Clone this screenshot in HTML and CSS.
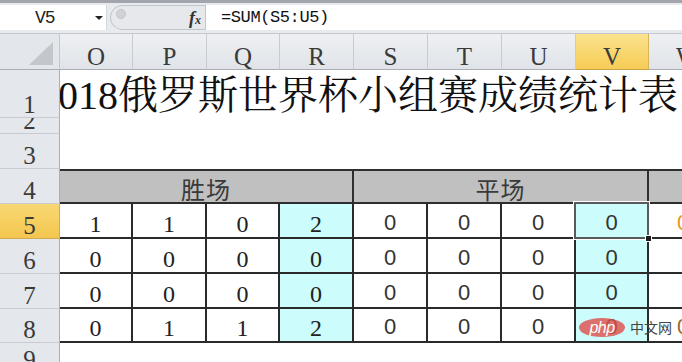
FILE: index.html
```html
<!DOCTYPE html>
<html lang="zh">
<head>
<meta charset="utf-8">
<title>2018俄罗斯世界杯小组赛成绩统计表</title>
<link rel="stylesheet" href="styles.css">
</head>
<body>
<div class="fbar">
  <div class="namebox"><span class="ref">V5</span><span class="caret"></span></div>
  <div class="pill">
    <svg class="knob" width="24" height="25" viewBox="0 0 24 25"><circle cx="9" cy="9" r="4.5" fill="#cfd2d6" stroke="#b9bdc2" stroke-width="0.8"/></svg>
    <span class="fx">f<span class="fxs">x</span></span>
  </div>
  <div class="formula">=SUM(S5:U5)</div>
</div>

<div class="sheet">
  <div class="corner"><svg width="24" height="23" viewBox="0 0 24 23"><polygon points="24,0 24,23 0,23" fill="#c3c6ca"/></svg></div>
  <div class="ch">O</div><div class="ch">P</div><div class="ch">Q</div><div class="ch">R</div>
  <div class="ch">S</div><div class="ch">T</div><div class="ch">U</div><div class="ch ch-sel">V</div><div class="ch ch-last">W</div>

  <div class="rh">1</div>
  <div class="title"><span class="title-text">2018俄罗斯世界杯小组赛成绩统计表</span></div>

  <div class="rh">2</div><div class="blank"></div>
  <div class="rh">3</div><div class="blank"></div>

  <div class="rh">4</div>
  <div class="grp">胜场</div><div class="grp">平场</div><div class="grp grp-last"></div>

  <div class="rh rh-sel">5</div>
  <div class="d">1</div><div class="d">1</div><div class="d">0</div><div class="d sum">2</div>
  <div class="d s">0</div><div class="d s">0</div><div class="d s">0</div><div class="d s sum sel">0</div><div class="d w"><span class="wv">0</span></div>

  <div class="rh">6</div>
  <div class="d">0</div><div class="d">0</div><div class="d">0</div><div class="d sum">0</div>
  <div class="d s">0</div><div class="d s">0</div><div class="d s">0</div><div class="d s sum">0</div><div class="d w"></div>

  <div class="rh">7</div>
  <div class="d">0</div><div class="d">0</div><div class="d">0</div><div class="d sum">0</div>
  <div class="d s">0</div><div class="d s">0</div><div class="d s">0</div><div class="d s sum">0</div><div class="d w"></div>

  <div class="rh">8</div>
  <div class="d">0</div><div class="d">1</div><div class="d">1</div><div class="d sum">2</div>
  <div class="d s">0</div><div class="d s">0</div><div class="d s">0</div><div class="d s sum">0</div><div class="d w"><span class="wv wv2">0</span></div>

  <div class="rh">9</div><div class="blank"></div>
</div>

<div class="wm"><span class="wm-logo">php</span><span class="wm-text">中文网</span></div>
</body>
</html>
```

FILE: styles.css
```css
html, body {
  margin: 0;
  padding: 0;
}
body {
  width: 682px;
  height: 362px;
  overflow: hidden;
  background: #ffffff;
  font-family: "Liberation Serif", "Noto Serif CJK SC", "Noto Sans CJK SC", serif;
  color: #222;
  position: relative;
}

/* ---------- formula bar ---------- */
.fbar {
  box-sizing: border-box;
  height: 34px;
  border-top: 3px solid #a2a6ac;
  border-bottom: 1px solid #c4c8ce;
  padding: 2px 0 3px;
  background: #e8ebee;
  display: flex;
}
.namebox {
  width: 107px;
  background: #ffffff;
  display: flex;
  align-items: center;
  box-sizing: border-box;
  padding-left: 35px;
  border-right: 1px solid #d3d6da;
}
.ref {
  font-family: "Liberation Mono", monospace;
  font-size: 18px;
  color: #222;
  letter-spacing: -1px;
}
.caret {
  width: 0;
  height: 0;
  margin-left: 40px;
  border-left: 4px solid transparent;
  border-right: 4px solid transparent;
  border-top: 4px solid #222;
}
.pill {
  width: 95px;
  margin-left: 3px;
  box-sizing: border-box;
  background: #e6e8ec;
  border: 1px solid #c2c6cc;
  border-right: none;
  border-radius: 13px 0 0 13px;
  display: flex;
  align-items: center;
  justify-content: space-between;
  padding-right: 4px;
}
.knob {
  display: block;
  margin-left: 1px;
}
.fx {
  font-family: "Liberation Serif", serif;
  font-style: italic;
  font-weight: bold;
  font-size: 18px;
  color: #333;
  line-height: 1;
}
.fxs {
  font-size: 12px;
}
.formula {
  flex: 1;
  background: #ffffff;
  border-left: 1px solid #c2c6cc;
  padding-left: 15px;
  font-family: "Liberation Mono", monospace;
  font-size: 17px;
  line-height: 25px;
  color: #111;
  letter-spacing: -0.4px;
}

/* ---------- sheet grid ---------- */
.sheet {
  display: grid;
  grid-template-columns: 60px 73px 74px 73px 74px 74px 74px 74px 73px 74px;
  grid-template-rows: 36px 48px 16px 35px 35px 35px 35px 35px 34px 30px;
  width: 682px;
  overflow: hidden;
}
.corner {
  background: #e3e6ea;
  border-right: 1px solid #c4c8ce;
  border-bottom: 1px solid #a9aeb5;
  display: flex;
  align-items: flex-end;
  justify-content: flex-end;
  padding: 0 6px 4px 0;
}
.corner svg { display: block; }
.ch {
  box-sizing: border-box;
  background: linear-gradient(#eef0f3, #e0e4e8);
  border-right: 1px solid #c8ccd2;
  border-bottom: 1px solid #a9aeb5;
  display: flex;
  align-items: flex-end;
  justify-content: center;
  font-size: 25px;
  line-height: 25px;
  color: #3a3a3a;
}
.ch-sel {
  background: linear-gradient(#fbe38e, #f6cc55);
  border-right-color: #d8b35a;
  border-bottom-color: #c9a24a;
}
.ch-last {
  border-right: none;
  justify-content: flex-start;
  padding-left: 27px;
}
.rh {
  box-sizing: border-box;
  background: #e4e7eb;
  border-right: 1px solid #a9aeb5;
  border-bottom: 1px solid #c8ccd2;
  display: flex;
  align-items: flex-end;
  justify-content: center;
  font-size: 25px;
  line-height: 24px;
  color: #3a3a3a;
  overflow: hidden;
}
.rh-sel {
  background: linear-gradient(#f8d873, #f4c64f);
  border-bottom-color: #d2aa4f;
}
.title {
  grid-column: span 9;
  overflow: hidden;
  white-space: nowrap;
  padding-top: 6px;
  box-sizing: border-box;
}
.title-text {
  display: block;
  font-size: 40px;
  line-height: 40px;
  text-indent: -22px;
  color: #111;
}
.blank {
  grid-column: span 9;
}
.grp {
  grid-column: span 4;
  box-sizing: border-box;
  background: #c0c0c0;
  border-top: 2px solid #2e2e2e;
  border-bottom: 2px solid #2e2e2e;
  border-right: 2px solid #2e2e2e;
  display: flex;
  align-items: center;
  justify-content: center;
  padding-top: 3px;
  font-family: "Noto Sans CJK SC", "Noto Sans", sans-serif;
  font-size: 24px;
  color: #3a3a3a;
  letter-spacing: 1px;
}
.grp-last {
  grid-column: span 1;
  border-right: none;
}
.d {
  box-sizing: border-box;
  background: #ffffff;
  border-right: 2px solid #2a2a2a;
  border-bottom: 2px solid #2a2a2a;
  display: flex;
  align-items: flex-end;
  justify-content: center;
  font-size: 24px;
  line-height: 24px;
  padding-bottom: 1px;
  color: #222;
}
.d.s {
  font-family: "Liberation Sans", sans-serif;
  font-size: 22px;
  line-height: 22px;
  padding-bottom: 3px;
  color: #333;
}
.sum {
  background: #ccfcfc;
}
.sel {
  position: relative;
}
.sel::after {
  content: "";
  position: absolute;
  left: -2px;
  top: -2px;
  right: -2px;
  bottom: -2px;
  border: 2px solid #5a5a5a;
  box-shadow: 0 0 0 1px #ffffff;
}
.sel::before {
  content: "";
  position: absolute;
  right: -5px;
  bottom: -5px;
  width: 5px;
  height: 5px;
  background: #1a1a1a;
  border: 1px solid #ffffff;
  z-index: 2;
}
.d.w {
  border-right: none;
  justify-content: flex-start;
  padding-left: 28px;
}
.wv {
  font-family: "Liberation Sans", sans-serif;
  font-size: 22px;
  line-height: 22px;
  padding-bottom: 2px;
  color: #e09a20;
}
.wv2 {
  color: #a06a30;
}

/* ---------- watermark overlay ---------- */
.wm {
  position: absolute;
  left: 579px;
  top: 318px;
  display: flex;
  align-items: center;
  gap: 5px;
}
.wm-logo {
  width: 46px;
  height: 19px;
  border-radius: 50%;
  background: rgba(222, 80, 76, 0.82);
  color: #ffffff;
  font-family: "Liberation Sans", sans-serif;
  font-style: italic;
  font-size: 16px;
  line-height: 19px;
  text-align: center;
  letter-spacing: -0.5px;
}
.wm-text {
  font-family: "Noto Sans CJK SC", sans-serif;
  font-size: 14px;
  line-height: 19px;
  color: #444;
}
```
